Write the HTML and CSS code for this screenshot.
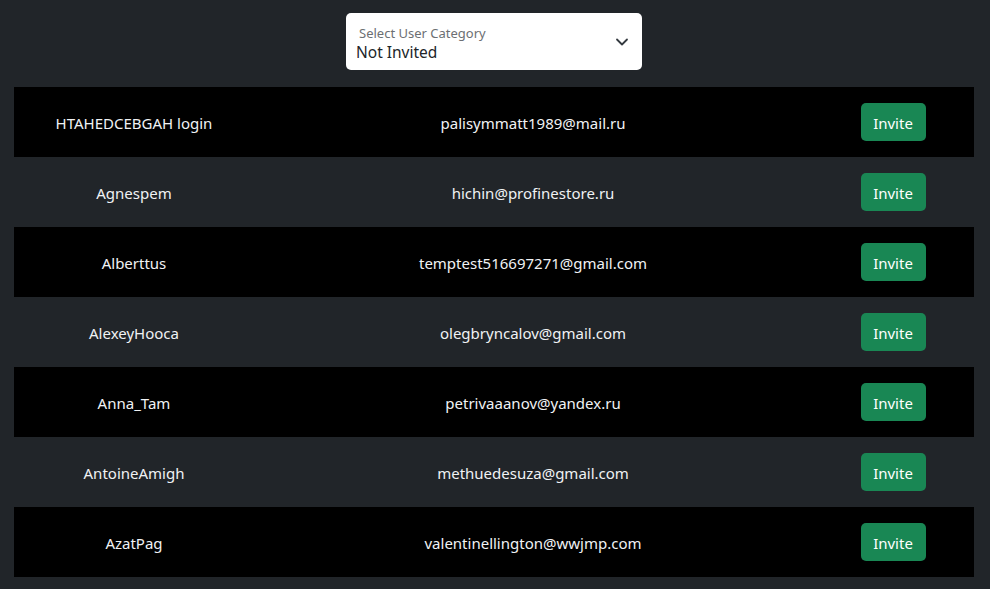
FILE: index.html
```html
<!DOCTYPE html>
<html>
<head>
<meta charset="utf-8">
<link rel="stylesheet" href="styles.css">
</head>
<body>
<div class="page">
  <div class="select-wrap">
    <div class="select">
      <div class="select-text">
        <span class="select-label">Select User Category</span>
        <span class="select-value">Not Invited</span>
      </div>
      <svg class="chevron" width="14" height="10" viewBox="0 0 14 10"><path d="M2 2.5l5 5 5-5" fill="none" stroke="#343a40" stroke-width="1.8" stroke-linecap="round" stroke-linejoin="round"/></svg>
    </div>
  </div>
  <div class="table">
    <div class="row odd"><div class="cell">HTAHEDCEBGAH login</div><div class="cell">palisymmatt1989@mail.ru</div><div class="cell"><button class="btn">Invite</button></div></div>
    <div class="row"><div class="cell">Agnespem</div><div class="cell">hichin@profinestore.ru</div><div class="cell"><button class="btn">Invite</button></div></div>
    <div class="row odd"><div class="cell">Alberttus</div><div class="cell">temptest516697271@gmail.com</div><div class="cell"><button class="btn">Invite</button></div></div>
    <div class="row"><div class="cell">AlexeyHooca</div><div class="cell">olegbryncalov@gmail.com</div><div class="cell"><button class="btn">Invite</button></div></div>
    <div class="row odd"><div class="cell">Anna_Tam</div><div class="cell">petrivaaanov@yandex.ru</div><div class="cell"><button class="btn">Invite</button></div></div>
    <div class="row"><div class="cell">AntoineAmigh</div><div class="cell">methuedesuza@gmail.com</div><div class="cell"><button class="btn">Invite</button></div></div>
    <div class="row odd"><div class="cell">AzatPag</div><div class="cell">valentinellington@wwjmp.com</div><div class="cell"><button class="btn">Invite</button></div></div>
  </div>
</div>
</body>
</html>
```
FILE: styles.css
```css
html, body {
  margin: 0;
  padding: 0;
  background: #212529;
  font-family: "Noto Sans", "Open Sans", sans-serif;
  color: #f0f2f4;
}
.page {
  padding: 13px 16px 12px 14px;
}
.select-wrap {
  display: flex;
  justify-content: center;
}
.select {
  width: 296px;
  height: 57px;
  box-sizing: border-box;
  background: #fff;
  border-radius: 5px;
  display: flex;
  align-items: center;
  justify-content: space-between;
  padding: 0 13px 0 10px;
}
.select-text {
  display: flex;
  flex-direction: column;
  padding-top: 3px;
}
.select-label {
  font-size: 13px;
  color: #6c6f73;
  padding-left: 3px;
  line-height: 17px;
}
.select-value {
  font-size: 15.5px;
  color: #212529;
  line-height: 20px;
}
.chevron {
  margin-top: 0;
}
.table {
  margin-top: 17px;
  display: flex;
  flex-direction: column;
}
.row {
  display: grid;
  grid-template-columns: 240px 558px 162px;
  height: 70px;
  align-items: center;
}
.row.odd {
  background: #000;
}
.cell {
  text-align: center;
  font-size: 15px;
  padding-top: 2px;
}
.btn {
  background: #198754;
  color: #fff;
  border: none;
  border-radius: 5px;
  width: 65px;
  height: 38px;
  font-family: inherit;
  font-size: 15px;
  padding: 2px 0 0;
  margin-top: -2px;
}
```
